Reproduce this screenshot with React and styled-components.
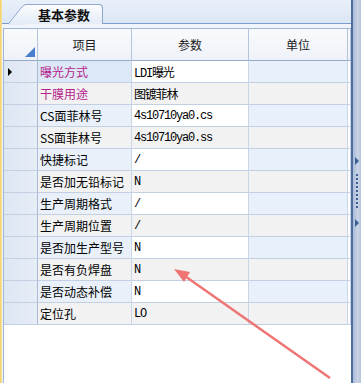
import React from "react";
import styled, { createGlobalStyle } from "styled-components";

const Global = createGlobalStyle`
  html, body { margin: 0; padding: 0; background: #ffffff; }
  body { font-family: "Noto Sans CJK SC", "DejaVu Sans", sans-serif; font-size: 12px; }
`;

const Frame = styled.div`
  position: relative;
  width: 361px;
  height: 383px;
  display: flex;
  overflow: hidden;
  background: #ffffff;
`;

const YellowEdge = styled.div`
  width: 2px;
  background: linear-gradient(90deg, #f3cf62, #f8e3a0);
`;

const Main = styled.div`
  width: 351px;
  display: flex;
  flex-direction: column;
`;

const TabBar = styled.div`
  height: 23px;
  display: flex;
  align-items: flex-end;
  padding-left: 6px;
  background: linear-gradient(180deg, #e9f0f9 0%, #dbe6f4 100%);
  border-bottom: 1px solid #7b9ccb;
`;

const Tab = styled.div`
  position: relative;
  height: 19px;
  margin-left: 17px;
  padding: 0 12px 0 13px;
  display: flex;
  align-items: center;
  font-size: 13px;
  font-weight: 700;
  color: #101010;
  background: linear-gradient(180deg, #fbfcfe 0%, #e3ebf6 100%);
  border: 1px solid #8ea9cf;
  border-left: none;
  border-bottom: none;
  border-top-right-radius: 4px;
  margin-bottom: -1px;
`;

const TabSlant = styled.svg`
  position: absolute;
  left: -17px;
  top: -1px;
`;

const Panel = styled.div`
  flex: 1;
  padding: 4px 0 0 1px;
  background: #f1f5fb;
  display: flex;
  flex-direction: column;
`;

const Grid = styled.div`
  flex: 1;
  background: #ffffff;
  border-top: 1px solid #9fb5d5;
  border-left: 1px solid #9fb5d5;
  display: grid;
  grid-template-columns: 34px 94px 117px 99px 1fr;
  grid-auto-rows: 22px;
  grid-template-rows: 32px;
  align-content: start;
`;

const HeadCell = styled.div`
  position: relative;
  display: flex;
  align-items: center;
  justify-content: center;
  font-size: 12px;
  color: #1a1a1a;
  background: linear-gradient(180deg, #f9fafc 0%, #eef2f8 100%);
  border-right: 1px solid #b4c4dc;
  border-bottom: 1px solid #96abc9;
`;

const Corner = styled.div`
  position: absolute;
  right: 2px;
  bottom: 3px;
  width: 0;
  height: 0;
  border-left: 10px solid transparent;
  border-bottom: 10px solid #4a7fd0;
`;

const RowHead = styled.div`
  display: flex;
  align-items: center;
  padding-left: 4px;
  background: linear-gradient(90deg, #dde6f3 0%, #e6edf7 100%);
  border-right: 1px solid #a9bbd6;
  border-bottom: 1px solid #c3d0e3;
`;

const Pointer = styled.div`
  width: 0;
  height: 0;
  border-top: 4px solid transparent;
  border-bottom: 4px solid transparent;
  border-left: 4px solid #000;
`;

const Cell = styled.div`
  display: flex;
  align-items: center;
  padding-left: 2px;
  white-space: nowrap;
  overflow: hidden;
  font-size: 12px;
  color: ${(p) => p.$color || "#000"};
  background: ${(p) => p.$bg};
  border-right: 1px solid #c9d6e8;
  border-bottom: 1px solid #c3d0e3;
  font-family: ${(p) =>
    p.$mono
      ? '"Liberation Mono", "Noto Sans CJK SC", monospace'
      : '"Noto Sans CJK SC", sans-serif'};
  letter-spacing: ${(p) => (p.$mono ? "-1.2px" : "0")};
`;

const RightStrip = styled.div`
  width: 8px;
  display: flex;
  flex-direction: column;
  align-items: center;
  justify-content: center;
  gap: 3px;
  border-left: 2px solid #4e6d9c;
  background: linear-gradient(90deg, #a9bcd8 0%, #c9d4e4 60%, #b6c4da 100%);
`;

const Nub = styled.div`
  width: 0;
  height: 0;
  border-top: 4px solid transparent;
  border-bottom: 4px solid transparent;
  border-left: 4px solid #3d5f95;
`;

const Dots = styled.div`
  width: 2px;
  height: 36px;
  margin: 6px 0;
  background: repeating-linear-gradient(180deg, #3d5f95 0 2px, transparent 2px 4px);
`;

const Arrow = styled.svg`
  position: absolute;
  left: 0;
  top: 0;
  pointer-events: none;
`;

const rows = [
  ["曝光方式", "LDI曝光", "#b4238c"],
  ["干膜用途", "图镀菲林", "#b4238c"],
  ["CS面菲林号", "4s10710ya0.cs"],
  ["SS面菲林号", "4s10710ya0.ss"],
  ["快捷标记", "/"],
  ["是否加无铅标记", "N"],
  ["生产周期格式", "/"],
  ["生产周期位置", "/"],
  ["是否加生产型号", "N"],
  ["是否有负焊盘", "N"],
  ["是否动态补偿", "N"],
  ["定位孔", "LO"],
];

export default function App() {
  return (
    <Frame>
      <Global />
      <YellowEdge />
      <Main>
        <TabBar>
          <Tab>
            <TabSlant width="18" height="21" viewBox="0 0 18 21">
              <defs>
                <linearGradient id="tabg" x1="0" y1="0" x2="0" y2="1">
                  <stop offset="0" stopColor="#fbfcfe" />
                  <stop offset="1" stopColor="#e3ebf6" />
                </linearGradient>
              </defs>
              <path d="M0 21 L13 4 Q16 0.5 18 0.5 L18 21 Z" fill="url(#tabg)" />
              <path d="M0 20.5 L13 4 Q16 0.5 18 0.5" fill="none" stroke="#8ea9cf" />
            </TabSlant>
            基本参数
          </Tab>
        </TabBar>
        <Panel>
          <Grid>
            <HeadCell>
              <Corner />
            </HeadCell>
            <HeadCell>项目</HeadCell>
            <HeadCell>参数</HeadCell>
            <HeadCell>单位</HeadCell>
            <HeadCell />
            {rows.map(([name, value, color], i) => {
              const odd = i % 2 === 1;
              return (
                <React.Fragment key={name}>
                  <RowHead>{i === 0 && <Pointer />}</RowHead>
                  <Cell $color={color} $bg={i === 0 ? "#dde8f6" : odd ? "#f2f2f2" : "#e9f0f9"}>
                    {name}
                  </Cell>
                  <Cell $mono $bg={odd ? "#f2f2f2" : "#ffffff"}>
                    {value}
                  </Cell>
                  <Cell $bg={odd ? "#f2f2f2" : "#e8f0fb"} />
                  <Cell $bg="#ffffff" />
                </React.Fragment>
              );
            })}
          </Grid>
        </Panel>
      </Main>
      <RightStrip>
        <Nub />
        <Dots />
        <Nub />
      </RightStrip>
      <Arrow width="361" height="383" viewBox="0 0 361 383">
        <line x1="330" y1="378" x2="182" y2="274" stroke="#ef7575" strokeWidth="2.5" />
        <polygon points="174,269 190,272 184,282" fill="#ef7575" />
      </Arrow>
    </Frame>
  );
}
